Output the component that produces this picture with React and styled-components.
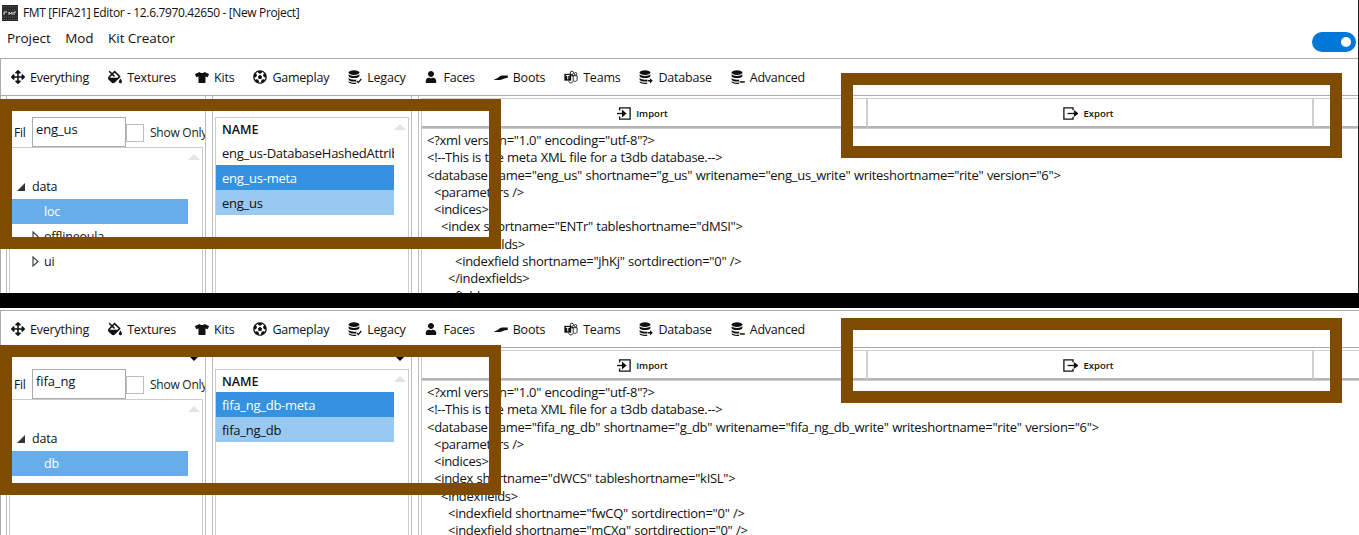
import React from 'react';
import styled, { createGlobalStyle } from 'styled-components';
import { FaArrowsAlt, FaFillDrip, FaTshirt, FaFutbol, FaUser } from 'react-icons/fa';

const font = '"Open Sans", "Noto Sans", "Liberation Sans", sans-serif';

const Global = createGlobalStyle`
  html, body {
    margin: 0;
    padding: 0;
    background: #fff;
  }
  * {
    box-sizing: border-box;
  }
`;

function DbIcon({ badge }) {
  return (
    <svg width="14" height="14" viewBox="0 0 14 14">
      <ellipse cx="6" cy="2.6" rx="5.4" ry="2.3" fill="#111" />
      <path d="M.6 4.3v1.6C.6 7.2 3 8 6 8s5.4-.8 5.4-2.1V4.3C10.4 5.4 8.4 6 6 6S1.600 5.400.6 4.300z" fill="#111" />
      <path d="M.6 8v1.500C.6 10.800 3 11.600 6 11.600c.8 0 1.500 0 2.200-.2V9.500C7.500 9.600 6.800 9.700 6 9.700 3.600 9.700 1.600 9.100.6 8z" fill="#111" />
      <path d="M.6 11.300v.5C.6 13.100 3 13.900 6 13.900c.8 0 1.500 0 2.200-.2v-1.100c-.7.1-1.400.2-2.200.2-2.400 0-4.400-.6-5.400-1.500z" fill="#111" />
      {badge === 'check' && <path d="M8.800 11l1.500 1.600L13.300 9" stroke="#111" strokeWidth="1.300" fill="none" />}
      {badge === 'arrow' && <path d="M8.600 10h2.400V8.200l2.800 2.600-2.800 2.600v-1.800H8.600z" fill="#111" />}
      {badge === 'minus' && <rect x="8.800" y="11.200" width="5" height="1.500" fill="#111" />}
    </svg>
  );
}

function BootIcon() {
  return (
    <svg width="16" height="14" viewBox="0 0 16 14">
      <path d="M.3 9.600C2.600 9.200 4.600 8 6.300 6.400c1.200-.9 2.500-1.200 4-1.200h5.400v2.900c-1.700-.2-3.200.1-4.600.9-1.900 1-4.100 1.500-6.300 1.500H.8c-.5 0-.7-.5-.5-.9z" fill="#111" />
    </svg>
  );
}

function TeamsIcon() {
  return (
    <svg width="16" height="14" viewBox="0 0 16 14">
      <circle cx="9" cy="2.300" r="1.900" fill="none" stroke="#111" strokeWidth="1" />
      <circle cx="13.300" cy="3.300" r="1.400" fill="none" stroke="#111" strokeWidth="1" />
      <path d="M9 5.500h6v4.300c0 1.300-1 2.200-2.200 2.200-.7 0-1.300-.3-1.700-.7" fill="none" stroke="#111" strokeWidth="1" />
      <path d="M7 5.500h3.500v5.800c0 1.400-1.100 2.500-2.500 2.500s-2.500-.9-2.800-2" fill="none" stroke="#111" strokeWidth="1" />
      <rect x=".4" y="3.400" width="7.800" height="7.800" fill="#111" />
      <path d="M2.200 5.200h4.200M4.300 5.200v4.400" stroke="#fff" strokeWidth="1.200" />
    </svg>
  );
}

function ImportIcon() {
  return (
    <svg width="14" height="13" viewBox="0 0 14 13" fill="none" stroke="#111" strokeWidth="1.300">
      <path d="M2.600 3.500V.9h10.500v11.200H2.600V9.500" />
      <path d="M0 6.500h7.500" />
      <path d="M5.600 3.900l3 2.600-3 2.600z" fill="#111" />
    </svg>
  );
}

function ExportIcon() {
  return (
    <svg width="15" height="13" viewBox="0 0 15 13" fill="none" stroke="#111" strokeWidth="1.300">
      <path d="M10 3.200V.9H.9v11.200H10V9.800" />
      <path d="M4.500 6.500h7.500" />
      <path d="M11.500 4.300l3 2.200-3 2.200z" fill="#111" />
    </svg>
  );
}

const tabs = [
  { label: 'Everything', icon: <FaArrowsAlt size={14} /> },
  { label: 'Textures', icon: <FaFillDrip size={14} /> },
  { label: 'Kits', icon: <FaTshirt size={15} /> },
  { label: 'Gameplay', icon: <FaFutbol size={14} /> },
  { label: 'Legacy', icon: <DbIcon badge="check" /> },
  { label: 'Faces', icon: <FaUser size={12} /> },
  { label: 'Boots', icon: <BootIcon /> },
  { label: 'Teams', icon: <TeamsIcon /> },
  { label: 'Database', icon: <DbIcon badge="arrow" /> },
  { label: 'Advanced', icon: <DbIcon badge="minus" /> },
];

const first = {
  filter: 'eng_us',
  tree: [
    { label: 'data', level: 0, open: true },
    { label: 'loc', level: 1, selected: true },
    { label: 'offlineoula', level: 1, closed: true },
    { label: 'ui', level: 1, closed: true },
  ],
  rows: [
    { label: 'eng_us-DatabaseHashedAttributes' },
    { label: 'eng_us-meta', tone: 'dark' },
    { label: 'eng_us', tone: 'light' },
  ],
  xml: `<?xml version="1.0" encoding="utf-8"?>
<!--This is the meta XML file for a t3db database.-->
<database name="eng_us" shortname="g_us" writename="eng_us_write" writeshortname="rite" version="6">
  <parameters />
  <indices>
    <index shortname="ENTr" tableshortname="dMSI">
      <indexfields>
        <indexfield shortname="jhKj" sortdirection="0" />
      </indexfields>
      <fields>`,
};

const second = {
  filter: 'fifa_ng',
  markers: true,
  tree: [
    { label: 'data', level: 0, open: true },
    { label: 'db', level: 1, selected: true },
  ],
  rows: [
    { label: 'fifa_ng_db-meta', tone: 'dark' },
    { label: 'fifa_ng_db', tone: 'light' },
  ],
  xml: `<?xml version="1.0" encoding="utf-8"?>
<!--This is the meta XML file for a t3db database.-->
<database name="fifa_ng_db" shortname="g_db" writename="fifa_ng_db_write" writeshortname="rite" version="6">
  <parameters />
  <indices>
  <index shortname="dWCS" tableshortname="kISL">
    <indexfields>
      <indexfield shortname="fwCQ" sortdirection="0" />
      <indexfield shortname="mCXq" sortdirection="0" />
    </indexfields>`,
};

function Section({ data, height }) {
  return (
    <Editor $height={height}>
      <TabBar>
        {tabs.map((t) => (
          <Tab key={t.label}>
            <TabIcon>{t.icon}</TabIcon>
            {t.label}
          </Tab>
        ))}
      </TabBar>
      <Body>
        <Column>
          {data.markers && <Marker />}
          <FilterRow>
            <FilterLabel>Fil</FilterLabel>
            <FilterInput>{data.filter}</FilterInput>
            <Check />
            <ShowOnly>Show Only</ShowOnly>
          </FilterRow>
          <TreeBox>
            <ScrollUp />
            {data.tree.map((n) => (
              <TreeRow key={n.label} $selected={n.selected} $level={n.level}>
                {n.open && <OpenArrow />}
                {n.closed && (
                  <ClosedArrow viewBox="0 0 7 11">
                    <path d="M1 1l5 4.500-5 4.500z" fill="none" stroke="#444" strokeWidth="1.200" />
                  </ClosedArrow>
                )}
                {n.label}
              </TreeRow>
            ))}
          </TreeBox>
        </Column>
        <Column>
          {data.markers && <Marker />}
          <ListBox>
            <ScrollUp />
            <ListHead>NAME</ListHead>
            {data.rows.map((r) => (
              <ListRow key={r.label} $tone={r.tone}>{r.label}</ListRow>
            ))}
          </ListBox>
        </Column>
        <Viewer>
          <ButtonRow>
            <ActionButton><ImportIcon />Import</ActionButton>
            <ActionButton><ExportIcon />Export</ActionButton>
            <ActionButton />
          </ButtonRow>
          <XmlBox>{data.xml}</XmlBox>
        </Viewer>
      </Body>
    </Editor>
  );
}

export default function App() {
  return (
    <Page>
      <Global />
      <TopArea>
        <TitleBar>
          <AppIcon viewBox="0 0 16 16">
            <rect width="16" height="16" fill="#2b2b2b" />
            <path d="M0 2h16M0 5h16M0 12h16M0 14.500h16" stroke="#555" strokeWidth="1" strokeDasharray="1 1" />
            <path d="M2 10V7h3M7 10V7l1.500 2L10 7v3M12 10V7h2" stroke="#ddd" strokeWidth="1" fill="none" />
          </AppIcon>
          FMT [FIFA21] Editor - 12.6.7970.42650 - [New Project]
        </TitleBar>
        <MenuBar>
          <Menu>Project</Menu>
          <Menu>Mod</Menu>
          <Menu>Kit Creator</Menu>
          <Toggle />
        </MenuBar>
        <Section data={first} height={235} />
      </TopArea>
      <Band />
      <Section data={second} height={225} />
      <Annotation $x={0} $y={99} $w={501} $h={150} />
      <Annotation $x={841} $y={73} $w={501} $h={85} />
      <Annotation $x={0} $y={345} $w={501} $h={150} />
      <Annotation $x={841} $y={318} $w={501} $h={85} />
    </Page>
  );
}

const Page = styled.div`
  position: relative;
  width: 1359px;
  height: 535px;
  overflow: hidden;
  background: #fff;
  font-family: ${font};
  color: #111;
`;
const TopArea = styled.div`
  border-right: 1px solid #222;
`;
const TitleBar = styled.div`
  display: flex;
  align-items: center;
  gap: 5px;
  height: 25px;
  padding-left: 2px;
  font-size: 12px;
  letter-spacing: -0.36px;
`;
const AppIcon = styled.svg`
  width: 16px;
  height: 16px;
`;
const MenuBar = styled.div`
  display: flex;
  align-items: center;
  gap: 14.500px;
  height: 33px;
  padding: 0 2px 7px 7px;
  font-size: 13.500px;
  letter-spacing: -0.05px;
`;
const Menu = styled.span``;
const Toggle = styled.div`
  position: relative;
  width: 44px;
  height: 20px;
  margin: 7px 0 0 auto;
  border-radius: 10px;
  background: #0078d7;
  &::after {
    content: '';
    position: absolute;
    right: 5px;
    top: 5px;
    width: 10px;
    height: 10px;
    border-radius: 50%;
    background: #fff;
  }
`;
const Band = styled.div`
  height: 15px;
  margin-bottom: 2px;
  background: #000;
`;
const Editor = styled.div`
  display: flex;
  flex-direction: column;
  height: ${(p) => p.$height}px;
  overflow: hidden;
  border-top: 1px solid #ababab;
  border-left: 1px solid #ababab;
`;
const TabBar = styled.div`
  display: flex;
  flex: none;
  align-items: center;
  gap: 19px;
  height: 36px;
  padding-left: 10px;
  font-size: 12.500px;
  letter-spacing: -0.22px;
`;
const Tab = styled.div`
  display: flex;
  align-items: center;
  gap: 5px;
`;
const TabIcon = styled.span`
  display: flex;
  align-items: center;
  justify-content: center;
  width: 14px;
  height: 14px;
  color: #111;
`;
const Body = styled.div`
  display: flex;
  flex: none;
  gap: 6px;
  height: 300px;
  padding-left: 5px;
  border-top: 1px solid #ababab;
`;
const Column = styled.div`
  position: relative;
  display: flex;
  flex: none;
  flex-direction: column;
  width: 200px;
  padding: 21px 2px 0;
  border-left: 1px solid #bdbdbd;
  border-right: 1px solid #bdbdbd;
`;
const Marker = styled.div`
  position: absolute;
  top: 8px;
  right: 6px;
  border-left: 5px solid transparent;
  border-right: 5px solid transparent;
  border-top: 5px solid #000;
`;
const FilterRow = styled.div`
  display: flex;
  flex: none;
  align-items: center;
  height: 30px;
  margin-right: -2px;
  padding-left: 5px;
  overflow: hidden;
  font-size: 12px;
  letter-spacing: -0.25px;
`;
const FilterLabel = styled.span`
  flex: none;
  width: 18px;
`;
const FilterInput = styled.div`
  flex: none;
  width: 94px;
  height: 30px;
  padding: 2px 3px;
  border: 1px solid #ababab;
  font-size: 13px;
  letter-spacing: -0.1px;
`;
const Check = styled.div`
  flex: none;
  width: 18px;
  height: 18px;
  margin: 2px 6px 0 0;
  border: 1px solid #bdbdbd;
`;
const ShowOnly = styled.span`
  flex: none;
  color: #222;
`;
const TreeBox = styled.div`
  position: relative;
  flex: 1;
  padding-top: 26px;
  border: 1px solid #ccc;
  font-size: 12.500px;
  letter-spacing: -0.2px;
`;
const ScrollUp = styled.div`
  position: absolute;
  top: 6px;
  right: 2px;
  border-left: 6px solid transparent;
  border-right: 6px solid transparent;
  border-bottom: 6px solid #e4e4e4;
`;
const TreeRow = styled.div`
  position: relative;
  display: flex;
  align-items: center;
  width: 178px;
  height: 25px;
  padding-left: ${(p) => 22 + p.$level * 12}px;
  background: ${(p) => (p.$selected ? '#66ade9' : 'transparent')};
  color: ${(p) => (p.$selected ? '#fff' : '#111')};
`;
const OpenArrow = styled.span`
  position: absolute;
  left: 7px;
  top: 9px;
  border-left: 8px solid transparent;
  border-bottom: 8px solid #333;
`;
const ClosedArrow = styled.svg`
  position: absolute;
  left: 22px;
  top: 7px;
  width: 7px;
  height: 11px;
`;
const ListBox = styled.div`
  position: relative;
  flex: 1;
  border: 1px solid #ccc;
  font-size: 13px;
  letter-spacing: -0.25px;
`;
const ListHead = styled.div`
  display: flex;
  align-items: center;
  height: 22px;
  padding-left: 6px;
  font-size: 12.500px;
  font-weight: 600;
  letter-spacing: 0;
`;
const toneBg = { dark: '#3492e0', light: '#99c9f0' };
const ListRow = styled.div`
  display: flex;
  align-items: center;
  width: 178px;
  height: 25px;
  padding-left: 6px;
  overflow: hidden;
  white-space: nowrap;
  background: ${(p) => toneBg[p.$tone] || 'transparent'};
  color: ${(p) => (p.$tone === 'dark' ? '#fff' : '#111')};
`;
const Viewer = styled.div`
  display: flex;
  flex: 1;
  flex-direction: column;
  min-width: 0;
  padding: 2px 0 0 2px;
  border-left: 1px solid #bdbdbd;
`;
const ButtonRow = styled.div`
  display: flex;
  flex: none;
`;
const ActionButton = styled.div`
  display: flex;
  flex: none;
  align-items: center;
  justify-content: center;
  gap: 5px;
  width: 446px;
  height: 30px;
  padding: 1px 3px 0 0;
  border: 1px solid #cfcfcf;
  border-bottom: 2px solid #b5b5b5;
  border-left-width: 0;
  border-right-width: 2px;
  font-size: 9.500px;
  font-weight: 600;
  &:first-child {
    width: 447px;
    border-left-width: 1px;
  }
`;
const XmlBox = styled.div`
  flex: 1;
  padding: 3px 5px;
  border-left: 1px solid #ccc;
  border-top: 1px solid #ccc;
  font-size: 13px;
  line-height: 17.300px;
  letter-spacing: -0.28px;
  word-spacing: 0.4px;
  white-space: pre;
`;
const Annotation = styled.div`
  position: absolute;
  left: ${(p) => p.$x}px;
  top: ${(p) => p.$y}px;
  width: ${(p) => p.$w}px;
  height: ${(p) => p.$h}px;
  border: 12px solid #7f4b00;
`;
